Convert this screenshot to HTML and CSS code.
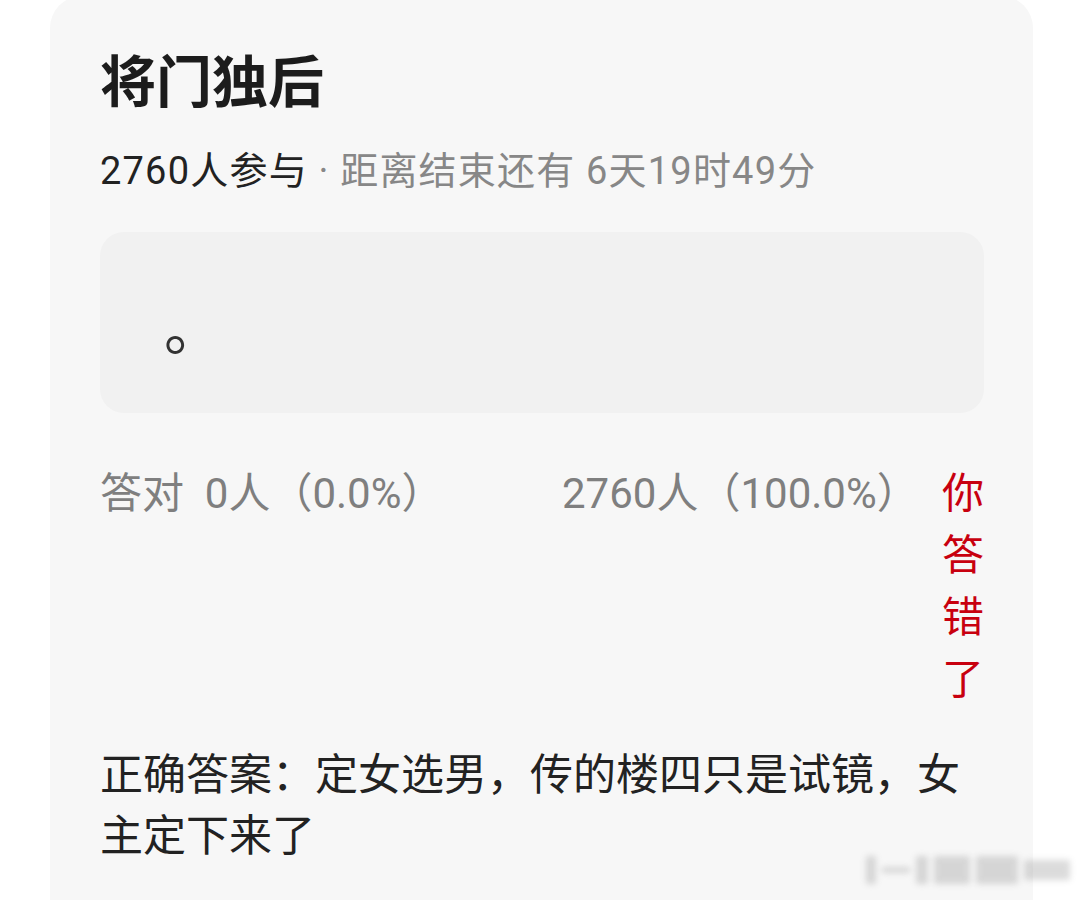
FILE: index.html
```html
<!DOCTYPE html>
<html lang="zh-CN">
<head>
<meta charset="utf-8">
<title>将门独后</title>
<link rel="stylesheet" href="styles.css">
</head>
<body>
<div class="page">
  <section class="card">
    <h1 class="title">将门独后</h1>
    <p class="meta"><span class="meta-count">2760人参与</span><span class="meta-time"> · 距离结束还有 6天19时49分</span></p>
    <div class="option">
      <span class="option-text">。</span>
    </div>
    <div class="stats">
      <div class="stat-right">答对&nbsp;&nbsp;0人（0.0%）</div>
      <div class="stat-wrong">2760人（100.0%）</div>
      <div class="verdict">你答错了</div>
    </div>
    <p class="answer">正确答案：定女选男，传的楼四只是试镜，女主定下来了</p>
  </section>
  <div class="mark" aria-hidden="true">
    <span class="m1"></span><span class="m2"></span><span class="m3"></span><span class="m4"></span><span class="m5"></span><span class="m6"></span>
  </div>
</div>
</body>
</html>
```

FILE: styles.css
```css
html, body {
  margin: 0;
  padding: 0;
  background: #ffffff;
}

body {
  font-family: Roboto, "Noto Sans CJK SC", sans-serif;
  color: #222222;
  overflow: hidden;
  height: 900px;
}

.page {
  position: relative;
  width: 1080px;
  height: 900px;
}

.card {
  margin: -4px 0 0 50px;
  width: 983px;
  height: 940px;
  box-sizing: border-box;
  padding: 52px 49px 0 50px;
  background: #f7f7f7;
  border-radius: 32px;
}

.title {
  margin: 0;
  font-size: 56px;
  line-height: 70px;
  font-weight: 700;
  color: #1c1c1c;
}

.meta {
  margin: 28px 0 0;
  font-size: 38px;
  line-height: 50px;
  letter-spacing: 1.2px;
}

.meta-count {
  color: #222222;
}

.meta-time {
  color: #878787;
}

.option {
  margin-top: 36px;
  height: 181px;
  box-sizing: border-box;
  padding: 14px 0 0 64px;
  background: #f1f1f1;
  border-radius: 24px;
  display: flex;
  align-items: center;
}

.option-text {
  font-size: 58px;
  line-height: 70px;
  color: #333333;
}

.stats {
  margin-top: 50px;
  display: grid;
  grid-template-columns: 462px 1fr 42px;
  font-size: 42px;
  line-height: 62px;
  color: #7f7f7f;
}

.verdict {
  width: 42px;
  color: #c8000f;
  word-break: break-all;
}

.answer {
  margin: 34px 0 0;
  font-size: 43px;
  line-height: 61px;
  color: #222222;
}

/* blurred corner stamp */
.mark {
  position: absolute;
  right: 10px;
  bottom: 12px;
  display: flex;
  align-items: center;
  gap: 6px;
  filter: blur(3px);
  opacity: 0.3;
}

.mark span {
  display: block;
  background: #8a8a8a;
  height: 28px;
}

.m1 { width: 10px; }
.m2 { width: 28px; height: 6px !important; }
.m3 { width: 12px; }
.m4 { width: 36px; }
.m5 { width: 42px; }
.m6 { width: 46px; height: 20px !important; }
```
